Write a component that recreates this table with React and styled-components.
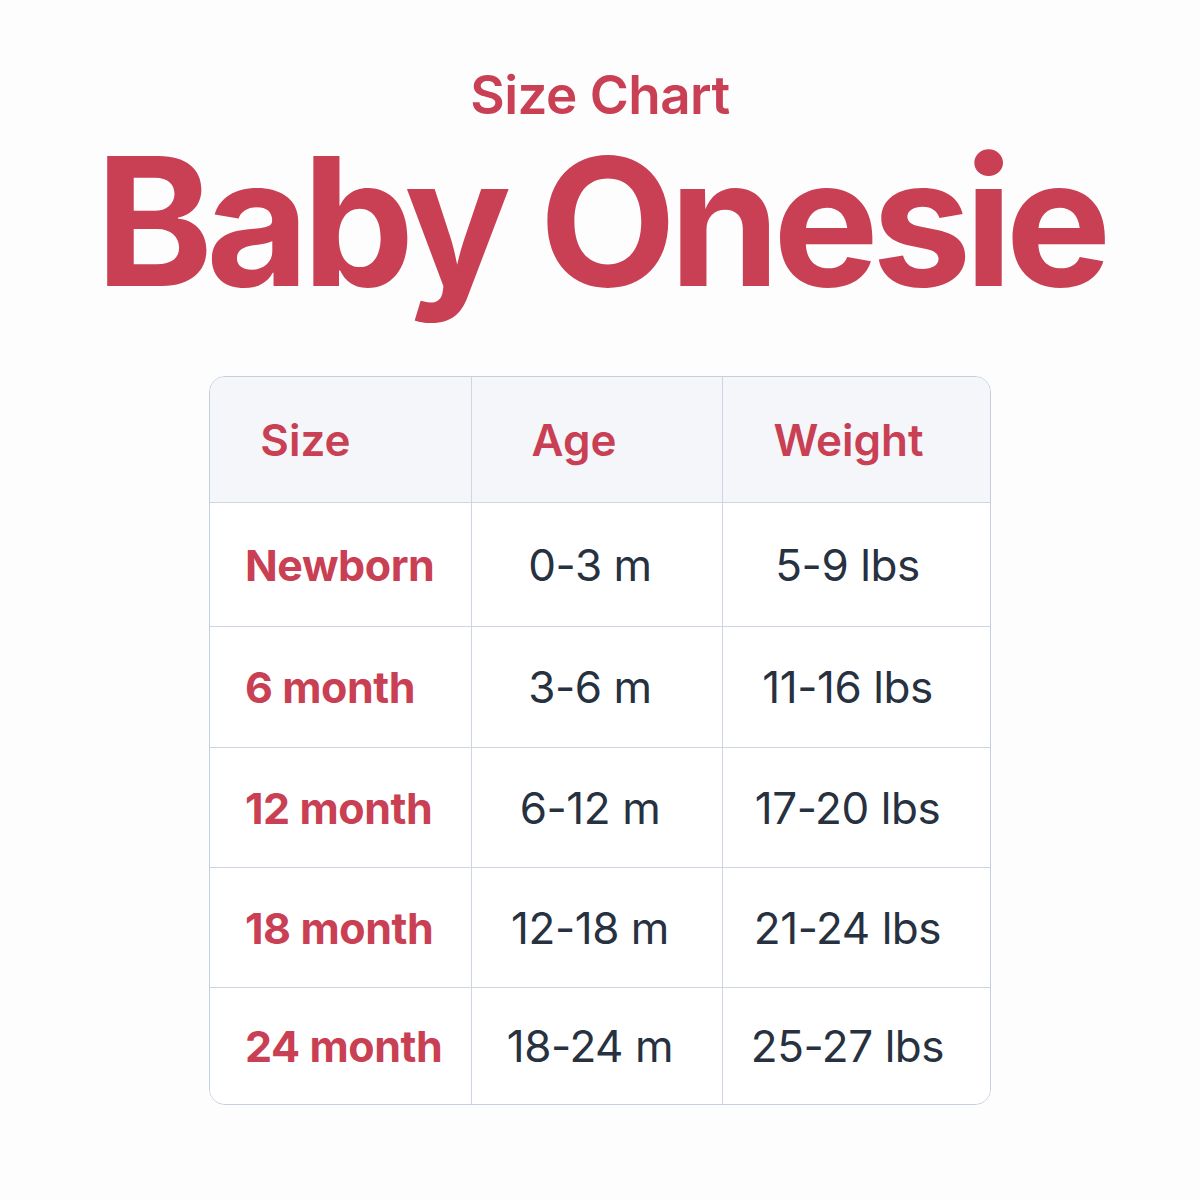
import React from "react";
import styled, { createGlobalStyle } from "styled-components";

const Global = createGlobalStyle`
  html, body { margin: 0; padding: 0; background: #fdfdfd; }
  body { font-family: Inter, "Noto Sans", sans-serif; }
`;

const Page = styled.div`
  width: 1200px;
  height: 1200px;
  display: flex;
  flex-direction: column;
  align-items: center;
  padding-top: 69px;
  box-sizing: border-box;
`;

const Kicker = styled.h2`
  margin: 0;
  font-size: 53px;
  line-height: 1;
  font-weight: 600;
  color: #c93f53;
  letter-spacing: -0.01em;
`;

const Title = styled.h1`
  margin: 11px 0 0;
  font-size: 178px;
  line-height: 1;
  font-weight: 700;
  color: #c93f53;
  letter-spacing: -0.04em;
`;

const Table = styled.div`
  margin-top: 65px;
  width: 782px;
  display: grid;
  grid-template-columns: 262px 251px 1fr;
  grid-template-rows: 126px 124px 121px 120px 120px 1fr;
  height: 729px;
  border: 1.5px solid #c4cfdd;
  border-radius: 16px;
  overflow: hidden;
  background: #ffffff;
  box-sizing: border-box;
`;

const Cell = styled.div`
  display: flex;
  align-items: center;
  justify-content: ${(p) => (p.$start ? "flex-start" : "center")};
  box-sizing: border-box;
  border-right: ${(p) => (p.$last ? "none" : "1.5px solid #cdd6e2")};
  border-bottom: ${(p) => (p.$bottom ? "none" : "1.5px solid #cdd6e2")};
  background: ${(p) => (p.$head ? "#f4f6f9" : "#ffffff")};
  padding: ${(p) => p.$pad || "0"};
`;

const HeadText = styled.span`
  font-size: 44px;
  font-weight: 600;
  color: #c93f53;
`;

const SizeText = styled.span`
  font-size: 43px;
  font-weight: 700;
  color: #c93f53;
  letter-spacing: -0.01em;
`;

const ValueText = styled.span`
  font-size: 44px;
  font-weight: 400;
  color: #27313f;
  letter-spacing: -0.01em;
`;

const rows = [
  ["Newborn", "0-3 m", "5-9 lbs"],
  ["6 month", "3-6 m", "11-16 lbs"],
  ["12 month", "6-12 m", "17-20 lbs"],
  ["18 month", "12-18 m", "21-24 lbs"],
  ["24 month", "18-24 m", "25-27 lbs"],
];

const heads = [
  { t: "Size", pad: "0 70px 0 0" },
  { t: "Age", pad: "0 46px 0 0" },
  { t: "Weight", pad: "0 16px 0 0" },
];

export default function App() {
  return (
    <>
      <Global />
      <Page>
        <Kicker>Size Chart</Kicker>
        <Title>Baby Onesie</Title>
        <Table>
          {heads.map((h, i) => (
            <Cell key={h.t} $head $last={i === 2} $pad={h.pad}>
              <HeadText>{h.t}</HeadText>
            </Cell>
          ))}
          {rows.map((r, ri) => {
            const bottom = ri === rows.length - 1;
            return (
              <React.Fragment key={r[0]}>
                <Cell $bottom={bottom} $start $pad="0 0 0 35px">
                  <SizeText>{r[0]}</SizeText>
                </Cell>
                <Cell $bottom={bottom} $pad="0 14px 0 0">
                  <ValueText>{r[1]}</ValueText>
                </Cell>
                <Cell $bottom={bottom} $last $pad="0 18px 0 0">
                  <ValueText>{r[2]}</ValueText>
                </Cell>
              </React.Fragment>
            );
          })}
        </Table>
      </Page>
    </>
  );
}
